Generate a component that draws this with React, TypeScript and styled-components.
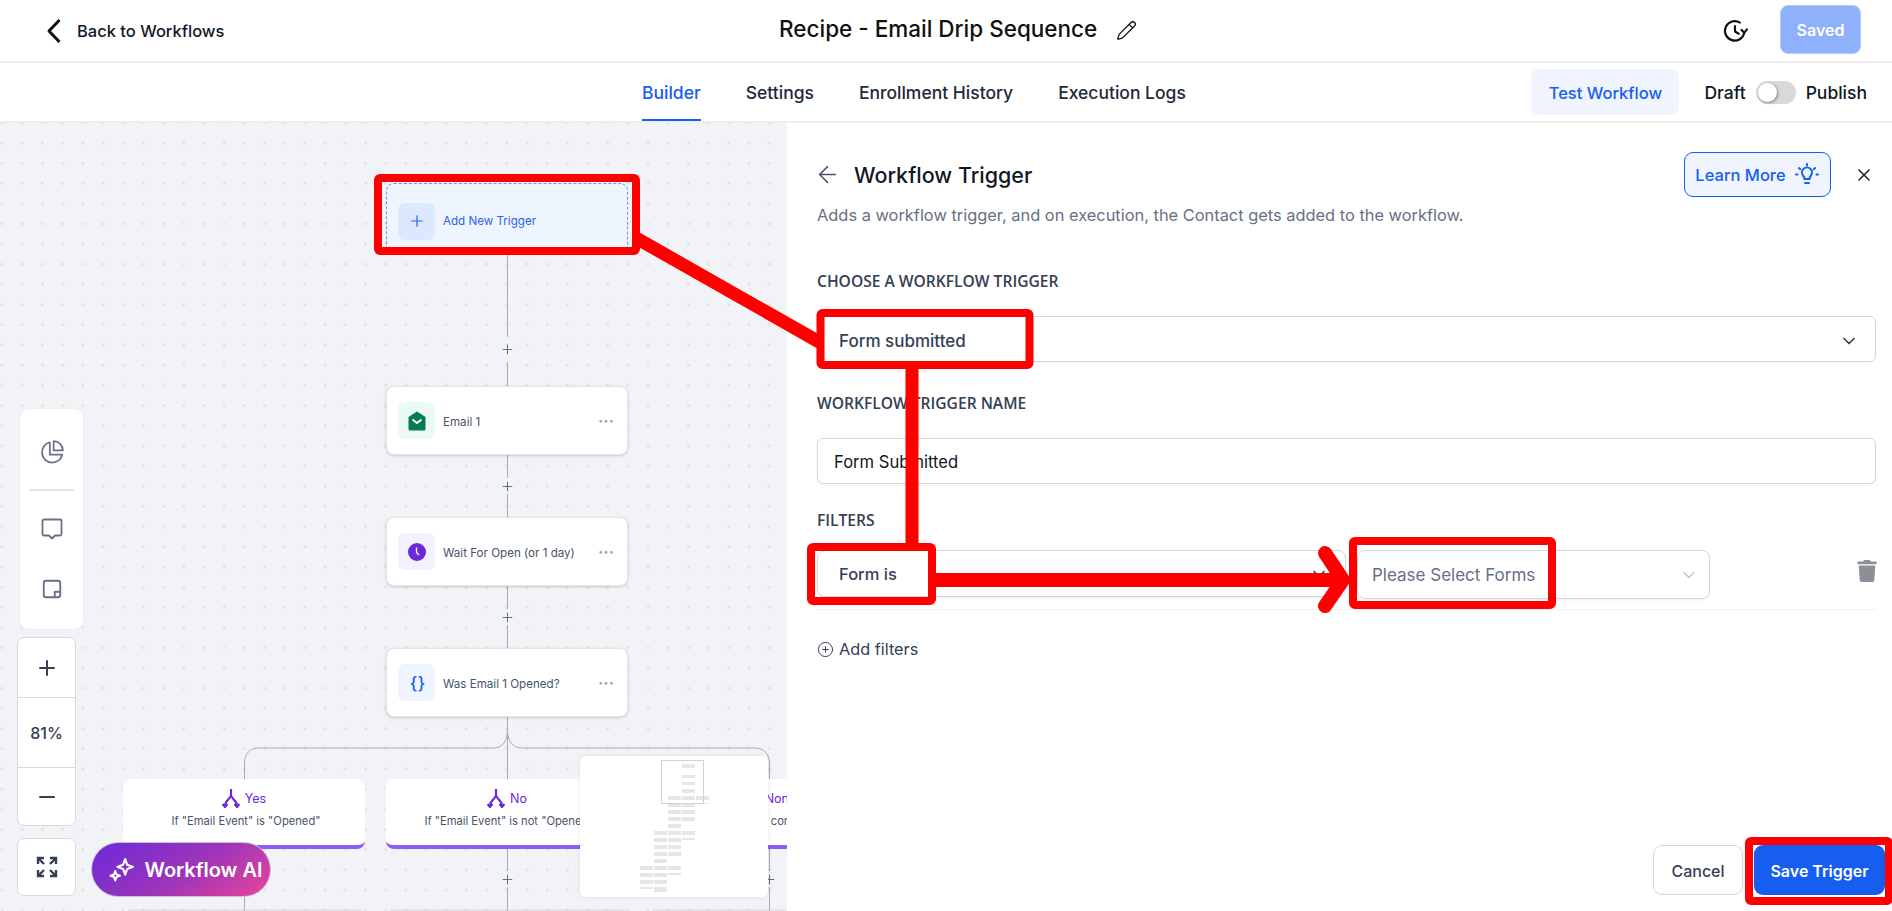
import styled, { createGlobalStyle } from "styled-components";
import { ChevronDown, Pencil, ArrowLeft, X, Plus, Minus, CirclePlus } from "lucide-react";
import { FaTrash } from "react-icons/fa";

const GlobalStyle = createGlobalStyle`
    html, body {
        margin: 0;
        padding: 0;
        background: #ffffff;
    }
    * {
        box-sizing: border-box;
    }
    body {
        font-family: "Inter", "Liberation Sans", sans-serif;
        color: #101828;
    }
`;

// bars [x, y, w, h] of the minimap, in minimap pixels
const miniBars = [
    [102, 8, 13, 4], [102, 19, 13, 3], [102, 26, 13, 3], [102, 33, 13, 4],
    [88, 40, 13, 4], [102, 40, 13, 4], [116, 40, 13, 4],
    [88, 47, 13, 4], [102, 47, 13, 4], [116, 47, 13, 1],
    [88, 54, 13, 4], [102, 54, 13, 4],
    [88, 61, 13, 4], [102, 61, 13, 4],
    [88, 68, 13, 4],
    [74, 75, 13, 4], [88, 75, 13, 4], [102, 75, 13, 4],
    [74, 82, 13, 4], [88, 82, 13, 4], [102, 82, 13, 2],
    [74, 89, 13, 4], [88, 89, 13, 4],
    [74, 96, 13, 4], [88, 96, 13, 4],
    [74, 103, 13, 4],
    [60, 110, 13, 4], [74, 110, 13, 4], [88, 110, 13, 4],
    [60, 117, 13, 4], [74, 117, 13, 4], [88, 117, 13, 2],
    [60, 124, 13, 4], [74, 124, 13, 4],
    [60, 131, 13, 2], [74, 131, 13, 5],
];

const App = () => {
    return (
        <Page>
            <GlobalStyle />
            <TopBar>
                <BackLink>
                    <svg width="16" height="26" viewBox="0 0 16 26" fill="none" stroke="#101010" strokeWidth="3" strokeLinejoin="round">
                        <path d="M13.500 2L3 13L13.500 24" />
                    </svg>
                    <span>Back to Workflows</span>
                </BackLink>
                <RecipeTitle>Recipe - Email Drip Sequence</RecipeTitle>
                <Pencil size={21} strokeWidth={1.5} color="#101010" />
                <TopRight>
                    <svg width="26" height="26" viewBox="0 0 24 24" fill="none" stroke="#101010" strokeWidth="2" strokeLinecap="round" strokeLinejoin="round">
                        <path d="M20.600 13.500A9 9 0 1 1 16.500 4.200" />
                        <path d="M12 7.500V12.500L15.500 14.500" />
                        <path d="M23 10.500L20.600 13.500L18 11" />
                    </svg>
                    <SavedButton>Saved</SavedButton>
                </TopRight>
            </TopBar>
            <TabBar>
                <Tab $active>Builder</Tab>
                <Tab>Settings</Tab>
                <Tab>Enrollment History</Tab>
                <Tab>Execution Logs</Tab>
                <TabRight>
                    <TestButton>Test Workflow</TestButton>
                    <ToggleLabel>Draft</ToggleLabel>
                    <Toggle />
                    <ToggleLabel>Publish</ToggleLabel>
                </TabRight>
            </TabBar>
            <Body>
                <Canvas>
                    <Lines width="787" height="788" viewBox="0 0 787 788" fill="none" stroke="#a9abb3" strokeWidth="1">
                        <path d="M507.500 132V214M507.500 239V263" />
                        <path d="M507.500 332V355M507.500 371V394" />
                        <path d="M507.500 463V486M507.500 502V525" />
                        <path d="M507.500 594V656" />
                        <path d="M507.500 606C507.500 618 503 625 493 625H258C250 625 244.500 631 244.500 640V656" />
                        <path d="M507.500 606C507.500 618 512 625 522 625H755C764 625 769.500 631 769.500 640V656" />
                        <path d="M244.500 726V788M507.500 726V748M507.500 764V788M769.500 726V748M769.500 764V788" />
                        <path d="M128 787H362M390 787H625M652 787H787" stroke="#d5d6db" />
                    </Lines>

                    <TriggerNode>
                        <IconTile $bg="#dbe8fe">
                            <Plus size={18} strokeWidth={1.6} color="#2563eb" />
                        </IconTile>
                        <TriggerText>Add New Trigger</TriggerText>
                    </TriggerNode>
                    <AddStep $x={507} $y={226} />

                    <Node $y={263}>
                        <IconTile $bg="#e9fbf3">
                            <svg width="18" height="20" viewBox="0 0 18 20">
                                <path d="M9 0.500L17.500 6V18a1.500 1.500 0 0 1-1.500 1.500H2A1.500 1.500 0 0 1 0.500 18V6Z" fill="#067a57" />
                                <path d="M4.500 8.500L9 12L13.500 8.500" fill="none" stroke="#fff" strokeWidth="1.800" />
                            </svg>
                        </IconTile>
                        <NodeText>Email 1</NodeText>
                        <NodeMenu>···</NodeMenu>
                    </Node>
                    <AddStep $x={507} $y={363} />

                    <Node $y={394}>
                        <IconTile $bg="#f4f1fe">
                            <svg width="18" height="18" viewBox="0 0 18 18">
                                <circle cx="9" cy="9" r="9" fill="#6d28d9" />
                                <path d="M8.500 4.500V9.500L11 12" fill="none" stroke="#fff" strokeWidth="1.300" />
                            </svg>
                        </IconTile>
                        <NodeText>Wait For Open (or 1 day)</NodeText>
                        <NodeMenu>···</NodeMenu>
                    </Node>
                    <AddStep $x={507} $y={494} />

                    <Node $y={525}>
                        <IconTile $bg="#eff4ff">
                            <BraceIcon>{"{ }"}</BraceIcon>
                        </IconTile>
                        <NodeText>Was Email 1 Opened?</NodeText>
                        <NodeMenu>···</NodeMenu>
                    </Node>

                    <BranchCard $x={123}>
                        <BranchTitle><SplitIcon />Yes</BranchTitle>
                        <BranchText>If "Email Event" is "Opened"</BranchText>
                    </BranchCard>
                    <BranchCard $x={386}>
                        <BranchTitle><SplitIcon />No</BranchTitle>
                        <BranchText>If "Email Event" is not "Opened"</BranchText>
                    </BranchCard>
                    <BranchCard $x={648}>
                        <BranchTitle><SplitIcon />None</BranchTitle>
                        <BranchText>When none of the conditions are met</BranchText>
                    </BranchCard>
                    <AddStep $x={507} $y={756} />
                    <AddStep $x={769} $y={756} />

                    <Minimap>
                        <svg width="188" height="141" viewBox="0 0 188 141">
                            {miniBars.map(([x, y, w, h], i) => (
                                <rect key={i} x={x} y={y} width={w} height={h} fill="#e6e6e6" />
                            ))}
                            <rect x="81.500" y="4.500" width="42" height="43" fill="none" stroke="#cdd2dc" />
                        </svg>
                    </Minimap>

                    <ToolColumn>
                        <ToolCard>
                            <ToolButton $h={75}>
                                <svg width="26" height="26" viewBox="0 0 24 24" fill="none" stroke="#667085" strokeWidth="1.600" strokeLinejoin="round">
                                    <path d="M10 3A9.500 9.500 0 1 0 21.500 14.500H10Z" />
                                    <path d="M13.500 2A8.500 8.500 0 0 1 22 10.500H13.500Z" />
                                </svg>
                            </ToolButton>
                            <ToolDivider />
                            <ToolButton $h={60}>
                                <svg width="24" height="24" viewBox="0 0 24 24" fill="none" stroke="#667085" strokeWidth="1.800" strokeLinejoin="round">
                                    <path d="M4 2.500H20A1.500 1.500 0 0 1 21.500 4V17A1.500 1.500 0 0 1 20 18.500H15L12 21.500L9 18.500H4A1.500 1.500 0 0 1 2.500 17V4A1.500 1.500 0 0 1 4 2.500Z" />
                                </svg>
                            </ToolButton>
                            <ToolButton $h={60}>
                                <svg width="22" height="22" viewBox="0 0 24 24" fill="none" stroke="#667085" strokeWidth="2" strokeLinejoin="round">
                                    <rect x="3" y="3" width="18" height="18" rx="2.500" />
                                    <path d="M21 15H15V21" />
                                </svg>
                            </ToolButton>
                        </ToolCard>
                        <ZoomCard>
                            <ZoomCell $h={59}><Plus size={24} strokeWidth={2} color="#344054" /></ZoomCell>
                            <ZoomCell $h={70}>81%</ZoomCell>
                            <ZoomCell $h={58}><Minus size={24} strokeWidth={2} color="#344054" /></ZoomCell>
                        </ZoomCard>
                        <ZoomCard>
                            <ZoomCell $h={56}>
                                <svg width="22" height="22" viewBox="0 0 22 22" fill="none" stroke="#344054" strokeWidth="2.400">
                                    <path d="M2 8V2H8M2 2L8 8" />
                                    <path d="M20 8V2H14M20 2L14 8" />
                                    <path d="M2 14V20H8M2 20L8 14" />
                                    <path d="M20 14V20H14M20 20L14 14" />
                                </svg>
                            </ZoomCell>
                        </ZoomCard>
                    </ToolColumn>

                    <AiButton>
                        <svg width="25" height="25" viewBox="0 0 24 24" fill="none" stroke="#fff" strokeWidth="2" strokeLinejoin="round">
                            <path d="M15.500 2L17.500 7.500L23 9.500L17.500 11.500L15.500 17L13.500 11.500L8 9.500L13.500 7.500Z" />
                            <path d="M6 13.500L7.200 16.800L10.500 18L7.200 19.200L6 22.500L4.800 19.200L1.500 18L4.800 16.800Z" />
                        </svg>
                        Workflow AI
                    </AiButton>
                </Canvas>

                <Panel>
                    <PanelHead>
                        <BackArrow><ArrowLeft size={27} strokeWidth={1.3} color="#475467" /></BackArrow>
                        <PanelTitle>Workflow Trigger</PanelTitle>
                        <LearnButton>
                            Learn More
                            <svg width="26" height="26" viewBox="0 0 26 26" fill="none" stroke="#155eef" strokeWidth="2" strokeLinecap="round">
                                <path d="M9 13.500a5 5 0 1 1 8 0c-1 1.200-1.500 2-1.500 3.500h-5c0-1.500-.5-2.300-1.500-3.500Z" />
                                <path d="M11 21h4" />
                                <path d="M13 2v1.500M5 6l1.200 1.200M21 6l-1.200 1.200M2 12.500h1.500M22.500 12.500H24" />
                            </svg>
                        </LearnButton>
                        <CloseButton><X size={20} strokeWidth={2} color="#1d2939" /></CloseButton>
                    </PanelHead>
                    <PanelDesc>Adds a workflow trigger, and on execution, the Contact gets added to the workflow.</PanelDesc>

                    <FieldLabel $top={45}>CHOOSE A WORKFLOW TRIGGER</FieldLabel>
                    <Field>
                        Form submitted
                        <ChevronDown size={20} strokeWidth={2} color="#344054" />
                    </Field>

                    <FieldLabel $top={31}>WORKFLOW TRIGGER NAME</FieldLabel>
                    <Field $plain>Form Submitted</Field>

                    <FieldLabel $top={26}>FILTERS</FieldLabel>
                    <FilterRow>
                        <FilterSelect $w={529} $h={47}>
                            Form is
                            <ChevronDown size={20} strokeWidth={2} color="#344054" />
                        </FilterSelect>
                        <FilterSelect $w={353} $h={49} $muted>
                            Please Select Forms
                            <ChevronDown size={20} strokeWidth={1} color="#667085" />
                        </FilterSelect>
                        <TrashSlot><FaTrash size={22} color="#8a8f98" /></TrashSlot>
                    </FilterRow>
                    <AddFilters>
                        <CirclePlus size={17} strokeWidth={1.4} color="#344054" />
                        Add filters
                    </AddFilters>

                    <PanelFooter>
                        <CancelButton>Cancel</CancelButton>
                        <SaveButton>Save Trigger</SaveButton>
                    </PanelFooter>
                </Panel>
            </Body>

            <Annotations width="1892" height="911" viewBox="0 0 1892 911" fill="none" stroke="#ff0000" strokeLinejoin="round">
                <path d="M636 238L821 343" strokeWidth="13" />
                <path d="M912 369V543" strokeWidth="13" />
                <path d="M936 580H1340" strokeWidth="14" />
                <path d="M1325 553L1343 580L1325 606" strokeWidth="14" strokeLinecap="round" />
                <rect x="378" y="178" width="258" height="73" rx="2" strokeWidth="8" />
                <rect x="820.500" y="313" width="209" height="52" rx="2" strokeWidth="8" />
                <rect x="811" y="547" width="121" height="54" rx="2" strokeWidth="8" />
                <rect x="1353" y="541" width="199" height="64" rx="2" strokeWidth="8" />
                <rect x="1749" y="841" width="140" height="60" rx="2" strokeWidth="8" />
            </Annotations>
        </Page>
    );
};

const SplitIcon = () => (
    <svg width="18" height="20" viewBox="0 0 18 20" fill="none" stroke="#6d28d9" strokeWidth="2.200" strokeLinejoin="round">
        <path d="M9 1V7C9 11 3 12 3 18" />
        <path d="M9 7C9 11 15 12 15 18" />
        <path d="M0.500 16L3 19L5.500 16" />
        <path d="M12.500 16L15 19L17.500 16" />
    </svg>
);

const Page = styled.div`
    position: relative;
    width: 1892px;
    height: 911px;
    overflow: hidden;
    background: #ffffff;
`;

const TopBar = styled.div`
    display: flex;
    align-items: center;
    height: 63px;
    padding-left: 46px;
    border-bottom: 2px solid #eeeeef;
`;

const BackLink = styled.div`
    display: flex;
    align-items: center;
    gap: 15px;
    width: 733px;
    font-size: 16.500px;
    font-weight: 500;
    color: #101828;
    span {
        margin-top: 1px;
    }
`;

const RecipeTitle = styled.div`
    font-size: 22.500px;
    font-weight: 500;
    color: #101010;
    margin-right: 19px;
    margin-bottom: 5px;
`;

const TopRight = styled.div`
    display: flex;
    align-items: center;
    gap: 32px;
    margin-left: auto;
    padding-right: 31px;
`;

const SavedButton = styled.button`
    width: 81px;
    height: 49px;
    margin-top: -2px;
    border: 1px solid #b5cbfa;
    border-radius: 8px;
    background: #8fb0fa;
    color: #ffffff;
    font-family: inherit;
    font-size: 16px;
    font-weight: 600;
`;

const TabBar = styled.div`
    display: flex;
    align-items: stretch;
    gap: 45px;
    height: 60px;
    padding-left: 642px;
    border-bottom: 2px solid #eeeeef;
`;

const Tab = styled.div<{ $active?: boolean }>`
    display: flex;
    align-items: center;
    padding-top: 2px;
    font-size: 17.500px;
    font-weight: 500;
    color: ${({ $active }) => ($active ? "#155eef" : "#1d2939")};
    border-bottom: 2px solid ${({ $active }) => ($active ? "#155eef" : "transparent")};
`;

const TabRight = styled.div`
    display: flex;
    align-items: center;
    margin-left: auto;
    padding-right: 25px;
`;

const TestButton = styled.button`
    width: 148px;
    height: 46px;
    margin-right: 25px;
    padding: 2px 0 0;
    border: none;
    border-radius: 8px;
    background: #eff4ff;
    color: #155eef;
    font-family: inherit;
    font-size: 16.500px;
    font-weight: 500;
`;

const ToggleLabel = styled.span`
    font-size: 17.500px;
    font-weight: 500;
    color: #101828;
`;

const Toggle = styled.div`
    position: relative;
    width: 40px;
    height: 23px;
    margin: 0 10px;
    border-radius: 12px;
    background: #d9d9d9;

    &::after {
        content: "";
        position: absolute;
        left: 2px;
        top: 2px;
        width: 19px;
        height: 19px;
        border-radius: 50%;
        background: #ffffff;
        box-shadow: 1px 1px 3px rgba(0, 0, 0, 0.4);
    }
`;

const Body = styled.div`
    display: flex;
    height: 788px;
`;

const Canvas = styled.div`
    position: relative;
    flex: 0 0 787px;
    overflow: hidden;
    background-color: #f2f3f7;
    background-image: radial-gradient(circle, #e2e3e8 1.300px, transparent 1.600px);
    background-size: 20.200px 20.200px;
    background-position: -8px 10px;
`;

const Lines = styled.svg`
    position: absolute;
    left: 0;
    top: 0;
`;

const TriggerNode = styled.div`
    position: absolute;
    left: 386px;
    top: 60px;
    display: flex;
    align-items: center;
    gap: 8px;
    width: 242px;
    height: 72px;
    padding: 4px 11px 0;
    border: 1px dashed #6f95ee;
    border-radius: 8px;
    background: #eef5ff;
`;

const IconTile = styled.div<{ $bg: string }>`
    display: flex;
    align-items: center;
    justify-content: center;
    flex: 0 0 37px;
    height: 37px;
    border-radius: 7px;
    background: ${({ $bg }) => $bg};
`;

const TriggerText = styled.span`
    font-size: 11.600px;
    font-weight: 400;
    color: #2f62e6;
`;

const Node = styled.div<{ $y: number }>`
    position: absolute;
    left: 386px;
    top: ${({ $y }) => $y}px;
    display: flex;
    align-items: center;
    gap: 8px;
    width: 242px;
    height: 69px;
    padding: 0 11px;
    border: 1px solid #e4e5ea;
    border-radius: 8px;
    background: #ffffff;
    box-shadow: 0 1px 3px rgba(16, 24, 40, 0.18);
`;

const NodeText = styled.span`
    margin-top: 2px;
    font-size: 11.600px;
    color: #475467;
`;

const NodeMenu = styled.span`
    margin-left: auto;
    margin-right: 2px;
    font-size: 16px;
    font-weight: 700;
    line-height: 1;
    color: #98a2b3;
`;

const BraceIcon = styled.span`
    font-size: 17px;
    font-weight: 500;
    color: #155eef;
    letter-spacing: -2px;
`;

const AddStep = styled(Plus).attrs({ size: 15, strokeWidth: 1.6, color: "#667085" }) <{ $x: number; $y: number }>`
    position: absolute;
    left: ${({ $x }) => $x - 7}px;
    top: ${({ $y }) => $y - 7}px;
`;

const BranchCard = styled.div<{ $x: number }>`
    position: absolute;
    left: ${({ $x }) => $x}px;
    top: 656px;
    display: flex;
    flex-direction: column;
    align-items: center;
    width: 242px;
    height: 70px;
    padding-top: 9px;
    border-bottom: 4px solid #8b5cf6;
    border-radius: 8px;
    background: #ffffff;
`;

const BranchTitle = styled.div`
    display: flex;
    align-items: center;
    gap: 5px;
    height: 20px;
    font-size: 12.500px;
    font-weight: 400;
    color: #6d28d9;
`;

const BranchText = styled.div`
    margin-top: 6px;
    margin-left: 4px;
    font-size: 11.200px;
    white-space: nowrap;
    color: #475467;
`;

const Minimap = styled.div`
    position: absolute;
    left: 580px;
    top: 633px;
    width: 188px;
    height: 141px;
    border-radius: 6px;
    background: #ffffff;
    box-shadow: 0 0 6px rgba(16, 24, 40, 0.08);
    svg {
        display: block;
    }
`;

const ToolColumn = styled.div`
    position: absolute;
    left: 17px;
    top: 285px;
    display: flex;
    flex-direction: column;
    gap: 7px;
    width: 67px;
`;

const ToolCard = styled.div`
    display: flex;
    flex-direction: column;
    align-items: center;
    align-self: flex-end;
    width: 65px;
    height: 222px;
    padding-top: 5px;
    border: 1px solid #eceef2;
    border-radius: 10px;
    background: #ffffff;
`;

const ToolButton = styled.div<{ $h: number }>`
    display: flex;
    align-items: center;
    justify-content: center;
    width: 100%;
    height: ${({ $h }) => $h}px;
`;

const ToolDivider = styled.div`
    width: 45px;
    height: 2px;
    margin-bottom: 8px;
    background: #e4e5e9;
`;

const ZoomCard = styled.div`
    width: 59px;
    border: 1px solid #d5d9e2;
    border-radius: 7px;
    background: #ffffff;
    & + & {
        margin-top: 5px;
    }
`;

const ZoomCell = styled.div<{ $h: number }>`
    display: flex;
    align-items: center;
    justify-content: center;
    height: ${({ $h }) => $h}px;
    font-size: 16px;
    font-weight: 500;
    color: #344054;
    & + & {
        border-top: 1px solid #d5d9e2;
    }
`;

const AiButton = styled.button`
    position: absolute;
    left: 91px;
    top: 719px;
    display: flex;
    align-items: center;
    justify-content: center;
    gap: 10px;
    width: 180px;
    height: 55px;
    padding: 0 0 0 10px;
    border: 1px solid #c7c0e2;
    border-radius: 28px;
    background: linear-gradient(145deg, #6a2ad8 0%, #a035b8 55%, #e8459a 100%);
    color: #ffffff;
    font-family: inherit;
    font-size: 20px;
    font-weight: 600;
    white-space: nowrap;
`;

const Panel = styled.div`
    display: flex;
    flex-direction: column;
    flex: 1;
    position: relative;
    padding: 29px 16px 16px 30px;
    background: #ffffff;
`;

const PanelHead = styled.div`
    display: flex;
    align-items: center;
    height: 45px;
`;

const BackArrow = styled.div`
    display: flex;
    margin-left: -3px;
`;

const PanelTitle = styled.div`
    margin-left: 13px;
    font-size: 21.500px;
    font-weight: 500;
    color: #101828;
`;

const LearnButton = styled.button`
    display: flex;
    align-items: center;
    justify-content: center;
    gap: 8px;
    width: 147px;
    height: 45px;
    margin-left: auto;
    padding: 0;
    border: 1px solid #155eef;
    border-radius: 9px;
    background: #eff4ff;
    color: #155eef;
    font-family: inherit;
    font-size: 16.500px;
    font-weight: 500;
`;

const CloseButton = styled.div`
    display: flex;
    margin-left: 23px;
    margin-right: 2px;
`;

const PanelDesc = styled.div`
    margin-top: 7px;
    font-size: 16.400px;
    line-height: 22px;
    color: #667085;
`;

const FieldLabel = styled.div<{ $top: number }>`
    margin-top: ${({ $top }) => $top}px;
    font-family: "Open Sans", "Liberation Sans", sans-serif;
    font-size: 15.600px;
    font-weight: 600;
    line-height: 20px;
    color: #344054;
`;

const Field = styled.div<{ $plain?: boolean }>`
    display: flex;
    align-items: center;
    justify-content: space-between;
    height: 46px;
    margin-top: 25px;
    padding: ${({ $plain }) => ($plain ? 1 : 3)}px 16px 0 ${({ $plain }) => ($plain ? 16 : 21)}px;
    border: 1px solid #d5d7de;
    border-radius: 6px;
    font-size: ${({ $plain }) => ($plain ? 16.600 : 17)}px;
    font-weight: ${({ $plain }) => ($plain ? 400 : 500)};
    color: ${({ $plain }) => ($plain ? "#101828" : "#344054")};
    box-shadow: 0 1px 2px rgba(16, 24, 40, 0.05);
`;

const FilterRow = styled.div`
    display: flex;
    align-items: flex-start;
    gap: 11px;
    height: 60px;
    margin-top: 20px;
    border-bottom: 1px solid #f0f1f3;
`;

const FilterSelect = styled.div<{ $w: number; $h: number; $muted?: boolean }>`
    display: flex;
    align-items: center;
    justify-content: space-between;
    width: ${({ $w }) => $w}px;
    height: ${({ $h }) => $h}px;
    padding: 0 ${({ $muted }) => ($muted ? 10 : 16)}px 0 ${({ $muted }) => ($muted ? 14 : 21)}px;
    border: 1px solid #d5d7de;
    border-radius: 8px;
    font-size: ${({ $muted }) => ($muted ? 17 : 16.500)}px;
    font-weight: ${({ $muted }) => ($muted ? 400 : 500)};
    color: ${({ $muted }) => ($muted ? "#667085" : "#344054")};
    box-shadow: 0 1px 2px rgba(16, 24, 40, 0.08);
`;

const TrashSlot = styled.div`
    display: flex;
    margin: 10px -2px 0 auto;
`;

const AddFilters = styled.div`
    display: flex;
    align-items: center;
    gap: 5px;
    height: 24px;
    margin-top: 27px;
    font-size: 16.300px;
    color: #344054;
`;

const PanelFooter = styled.div`
    display: flex;
    justify-content: flex-end;
    gap: 11px;
    margin-top: auto;
    margin-right: -9px;
`;

const CancelButton = styled.button`
    width: 90px;
    height: 50px;
    padding: 2px 0 0;
    border: 1px solid #d5d7de;
    border-radius: 9px;
    background: #ffffff;
    color: #344054;
    font-family: inherit;
    font-size: 16px;
    font-weight: 500;
`;

const SaveButton = styled.button`
    width: 131px;
    height: 50px;
    padding: 2px 0 0;
    border: none;
    border-radius: 9px;
    background: #155eef;
    color: #ffffff;
    font-family: inherit;
    font-size: 16px;
    font-weight: 600;
`;

const Annotations = styled.svg`
    position: absolute;
    left: 0;
    top: 0;
    pointer-events: none;
`;

export default App;
